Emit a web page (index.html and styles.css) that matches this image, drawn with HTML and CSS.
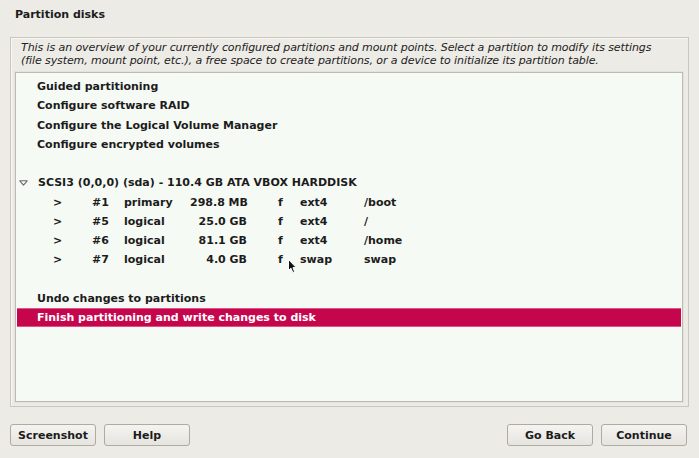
FILE: index.html
```html
<!DOCTYPE html>
<html>
<head>
<meta charset="utf-8">
<link rel="stylesheet" href="styles.css">
</head>
<body>
<div class="page">
  <div class="title">Partition disks</div>
  <div class="frame">
    <div class="desc">This is an overview of your currently configured partitions and mount points. Select a partition to modify its settings<br>(file system, mount point, etc.), a free space to create partitions, or a device to initialize its partition table.</div>
    <div class="list">
      <div class="row item">Guided partitioning</div>
      <div class="row item">Configure software RAID</div>
      <div class="row item">Configure the Logical Volume Manager</div>
      <div class="row item">Configure encrypted volumes</div>
      <div class="row"></div>
      <div class="row disk">
        <svg class="exp" width="9" height="6" viewBox="0 0 9 6"><path d="M0.8 0.8 H8.2 L4.5 5.2 Z" fill="none" stroke="#6b6b6b" stroke-width="1.1" stroke-linejoin="round"/></svg>
        <span>SCSI3 (0,0,0) (sda) - 110.4 GB ATA VBOX HARDDISK</span>
      </div>
      <div class="row part"><span></span><span>&gt;</span><span>#1</span><span>primary</span><span class="sz">298.8 MB</span><span></span><span>f</span><span>ext4</span><span>/boot</span></div>
      <div class="row part"><span></span><span>&gt;</span><span>#5</span><span>logical</span><span class="sz">25.0 GB</span><span></span><span>f</span><span>ext4</span><span>/</span></div>
      <div class="row part"><span></span><span>&gt;</span><span>#6</span><span>logical</span><span class="sz">81.1 GB</span><span></span><span>f</span><span>ext4</span><span>/home</span></div>
      <div class="row part"><span></span><span>&gt;</span><span>#7</span><span>logical</span><span class="sz">4.0 GB</span><span></span><span>f</span><span>swap</span><span>swap</span></div>
      <div class="row"></div>
      <div class="row item">Undo changes to partitions</div>
      <div class="row item selected">Finish partitioning and write changes to disk</div>
    </div>
  </div>
  <div class="buttons">
    <div class="group">
      <button class="btn">Screenshot</button>
      <button class="btn">Help</button>
    </div>
    <div class="group">
      <button class="btn">Go Back</button>
      <button class="btn">Continue</button>
    </div>
  </div>
  <svg class="cursor" width="10" height="15" viewBox="0 0 10 15"><path d="M0.5 0.5 L0.5 11.5 L3 9.2 L4.8 13.5 L6.6 12.7 L4.9 8.6 L8.2 8.6 Z" fill="#111" stroke="#fff" stroke-width="1"/></svg>
</div>
</body>
</html>
```
FILE: styles.css
```css
html, body {
  margin: 0;
  padding: 0;
}
body {
  background: #edebe6;
  font-family: "DejaVu Sans", "Liberation Sans", sans-serif;
  font-size: 11px;
  color: #1c1c1c;
}
.page {
  position: relative;
  width: 699px;
  height: 458px;
  overflow: hidden;
}
.title {
  font-weight: bold;
  line-height: 13px;
  padding: 8px 0 0 15px;
  height: 29px;
  box-sizing: border-box;
  margin-bottom: 8px;
}
.frame {
  margin-left: 10px;
  width: 679px;
  height: 370px;
  box-sizing: border-box;
  border: 1px solid #c9c6bf;
  box-shadow: inset 1px 1px 0 #f8f7f4;
  padding: 3px 5px 4px 4px;
  display: flex;
  flex-direction: column;
}
.desc {
  font-style: italic;
  line-height: 13px;
  padding-left: 6px;
  color: #222;
  margin-bottom: 5px;
  letter-spacing: -0.09px;
}
.list {
  flex: 1;
  background: #f6faf5;
  border: 1px solid #bdbab2;
  box-shadow: 0 0 0 1px #e4e2dc;
  padding: 4px 1px 0 1px;
  font-weight: bold;
}
.row {
  height: 19.25px;
  line-height: 19.25px;
  white-space: nowrap;
}
.item {
  padding-left: 20px;
}
.disk {
  display: flex;
  align-items: center;
  padding-left: 2px;
}
.exp {
  margin-right: 10px;
}
.part {
  display: grid;
  grid-template-columns: 36px 39px 32px 66px 57px 31px 22px 64px auto;
}
.sz {
  text-align: right;
}
.selected {
  background: #c6064c;
  color: #ffffff;
  box-shadow: inset 0 1px 0 #e0528a, inset 0 -1px 0 #e0528a;
}
.buttons {
  display: flex;
  justify-content: space-between;
  padding: 17px 12px 0 10px;
}
.group {
  display: flex;
  gap: 8px;
}
.btn {
  width: 86px;
  height: 22px;
  font-family: "DejaVu Sans", "Liberation Sans", sans-serif;
  font-size: 11px;
  font-weight: bold;
  color: #1c1c1c;
  background: linear-gradient(#f5f4f1, #e6e4df);
  border: 1px solid #aeaba3;
  border-radius: 3px;
  padding: 0;
}
.cursor {
  position: absolute;
  left: 288px;
  top: 259px;
}
```
